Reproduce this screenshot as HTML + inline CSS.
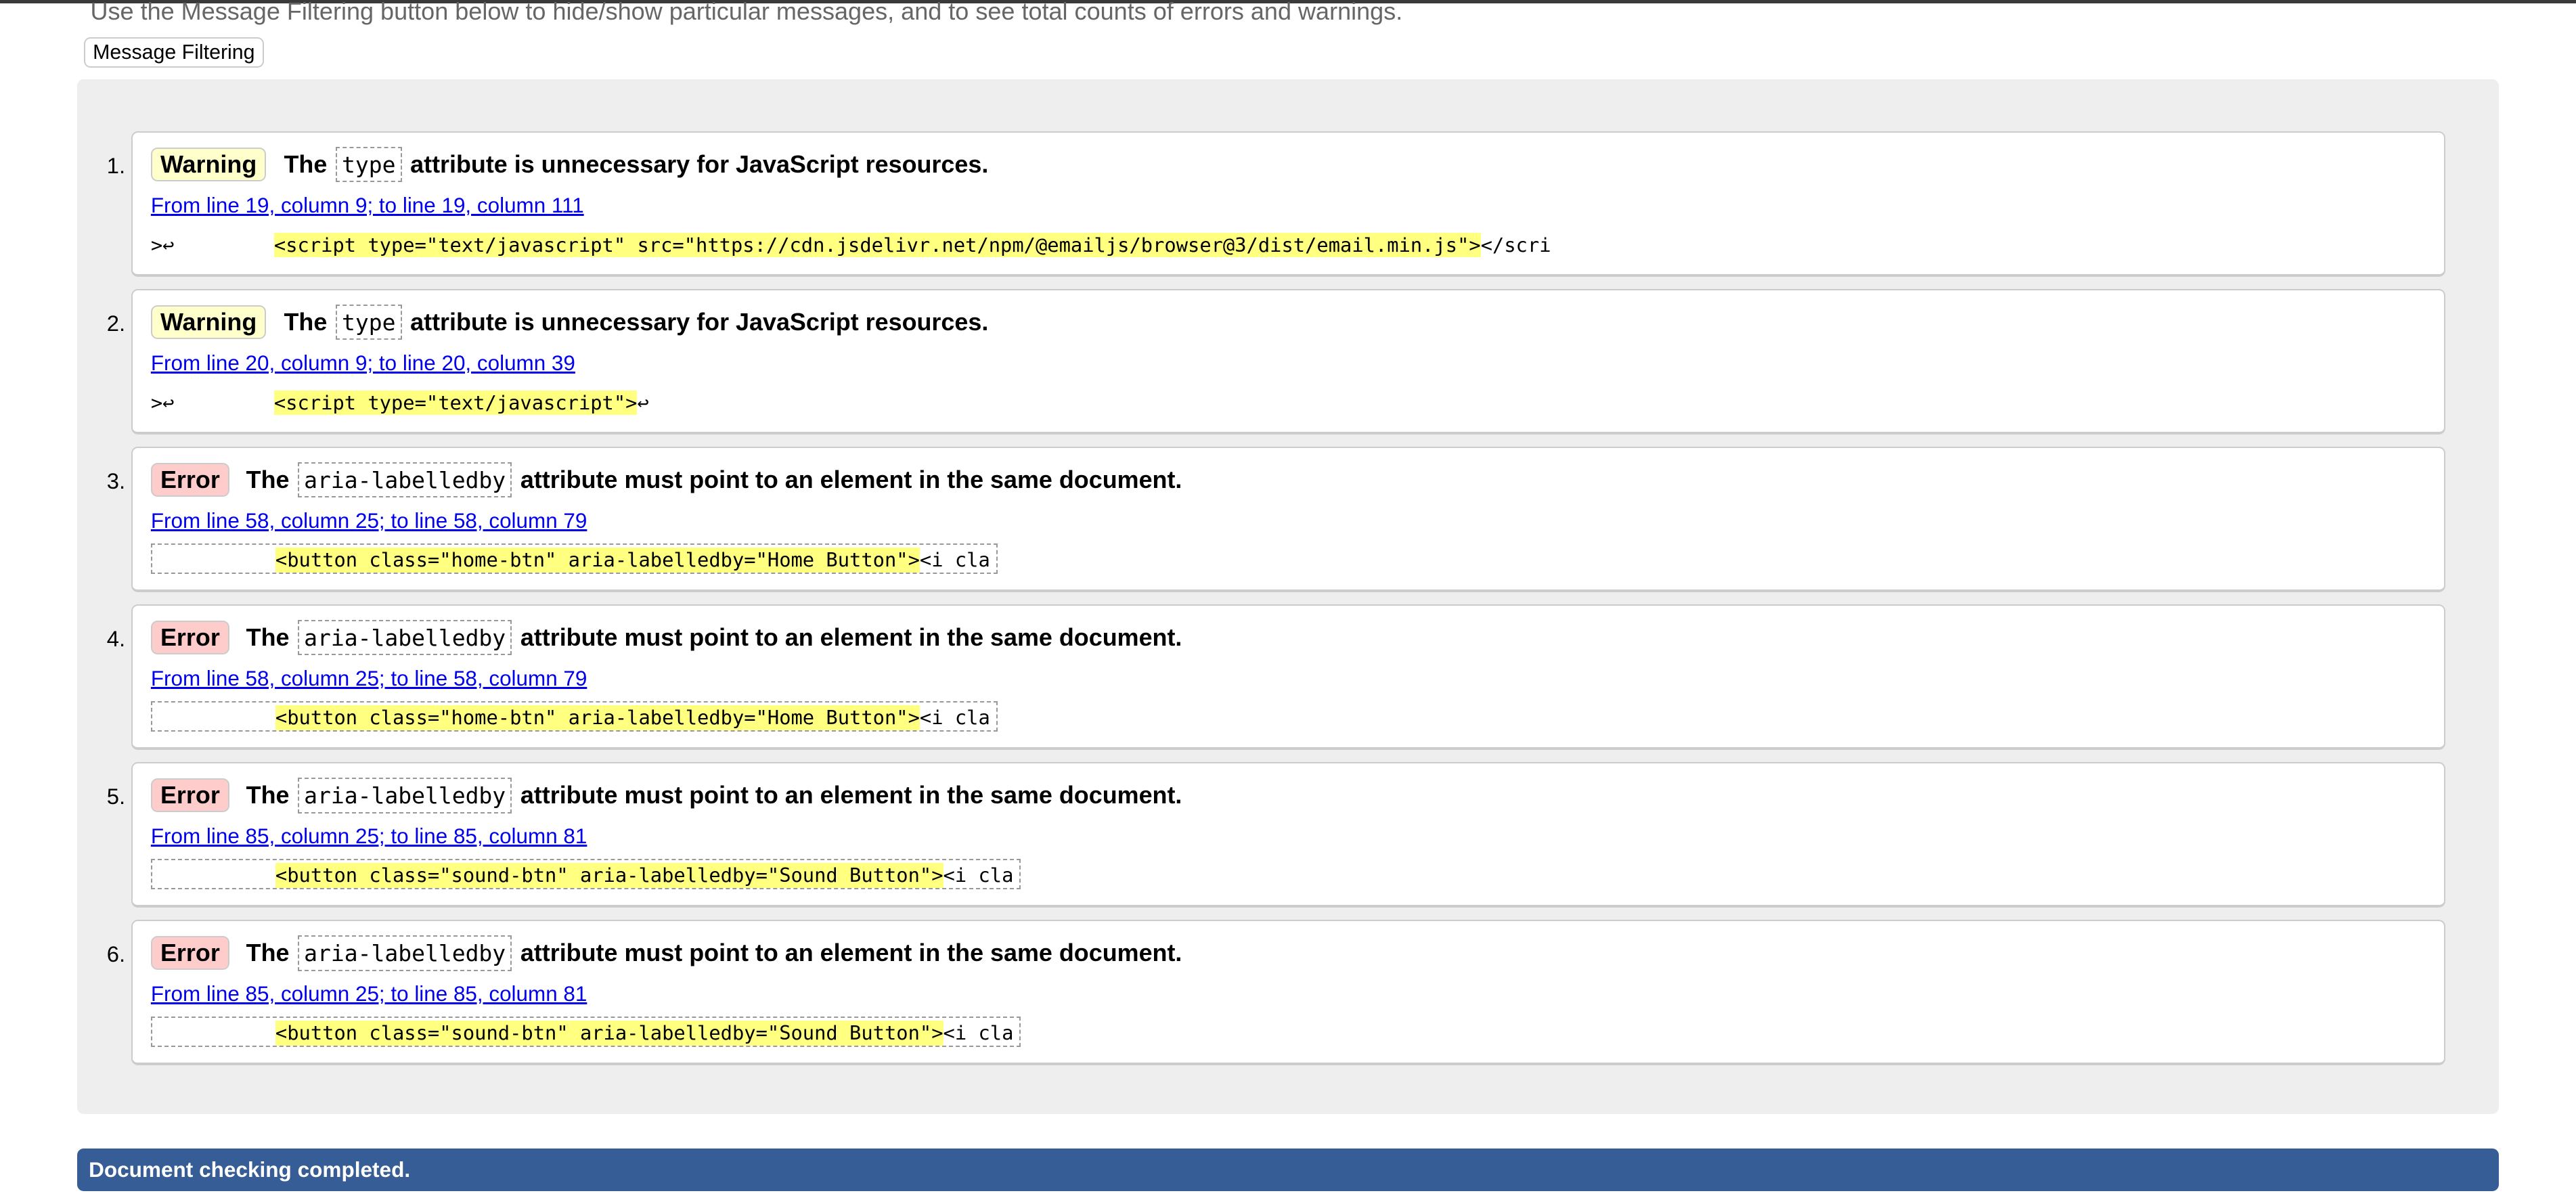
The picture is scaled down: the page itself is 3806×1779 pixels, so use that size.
<!DOCTYPE html>
<html><head><meta charset="utf-8"><style>
html{zoom:2.4273}
body{margin:0;width:1568px;height:733px;position:relative;overflow:hidden;background:#fff;font-family:"Liberation Sans",Arial,sans-serif;}
.topbar{position:absolute;left:0;top:0;width:1568px;height:2px;background:#3a3a3a}
.intro{position:absolute;left:55px;top:-3px;font-size:14.85px;color:#666;white-space:nowrap;line-height:20px}
.btn{position:absolute;left:51px;top:22.5px;width:108px;height:17px;border:1px solid #ccc;border-radius:4px;background:#fff;font-size:12.5px;line-height:17px;text-align:center;color:#000}
.panel{position:absolute;left:47px;top:48px;width:1474px;height:630px;background:#eee;border-radius:4px}
.num{position:absolute;left:65px;font-size:13.5px;color:#000}
.card{position:absolute;left:80px;width:1407px;height:86px;background:#fff;border:1px solid #ccc;border-bottom:2px solid #ccc;border-radius:4px}
.badge{position:absolute;left:11px;top:9px;height:19px;border:1px solid #ccc;border-radius:4px;font-weight:bold;font-size:14.8px;line-height:19px;padding:0 5px}
.w{background:#ffc}.e{background:#fcc}
.msg{position:absolute;top:8px;font-weight:bold;font-size:14.8px;line-height:22px;white-space:nowrap}
.msg code{font-family:"DejaVu Sans Mono","Liberation Mono",monospace;font-weight:normal;font-size:13.6px;border:1px dashed #999;padding:2px 3px;margin:0 1px}
.link{position:absolute;left:11px;top:37px;font-size:12.95px;color:#00e;text-decoration:underline;white-space:nowrap}
.src{position:absolute;left:11px;top:60px;height:17px;font-family:"DejaVu Sans Mono","Liberation Mono",monospace;font-size:11.85px;line-height:17px;white-space:nowrap}
.src .y{position:absolute;left:75px;top:0;white-space:pre}
.y b{font-weight:normal;background:#ffff80;display:inline-block;height:15px;line-height:15px}
.box{border:1px dashed #999;width:514px;height:17px;top:58px}
.box .y{left:75px;top:1px}
.box2{width:528px}
.mk{position:absolute;left:0;top:0}
.bar{position:absolute;left:47px;top:699px;width:1474px;height:26px;background:#365d95;border-radius:4px;color:#fff;font-weight:bold;font-size:13px;line-height:26px;padding-left:7px;box-sizing:border-box}
</style></head><body>
<div class="topbar"></div>
<div class="intro">Use the Message Filtering button below to hide/show particular messages, and to see total counts of errors and warnings.</div>
<div class="btn">Message Filtering</div>
<div class="panel"></div>

<div class="num" style="top:93px">1.</div>
<div class="card" style="top:80px">
<div class="badge w">Warning</div>
<div class="msg" style="left:92px">The <code>type</code> attribute is unnecessary for JavaScript resources.</div>
<div class="link">From line 19, column 9; to line 19, column 111</div>
<div class="src"><span class="mk">&gt;↩</span><span class="y"><b>&lt;script type="text/javascript" src="https://cdn.jsdelivr.net/npm/@emailjs/browser@3/dist/email.min.js"&gt;</b>&lt;/scri</span></div>
</div>

<div class="num" style="top:189px">2.</div>
<div class="card" style="top:176px">
<div class="badge w">Warning</div>
<div class="msg" style="left:92px">The <code>type</code> attribute is unnecessary for JavaScript resources.</div>
<div class="link">From line 20, column 9; to line 20, column 39</div>
<div class="src"><span class="mk">&gt;↩</span><span class="y"><b>&lt;script type="text/javascript"&gt;</b>↩</span></div>
</div>

<div class="num" style="top:285px">3.</div>
<div class="card" style="top:272px">
<div class="badge e">Error</div>
<div class="msg" style="left:69px">The <code>aria-labelledby</code> attribute must point to an element in the same document.</div>
<div class="link">From line 58, column 25; to line 58, column 79</div>
<div class="src box"><span class="y"><b>&lt;button class="home-btn" aria-labelledby="Home Button"&gt;</b>&lt;i cla</span></div>
</div>

<div class="num" style="top:381px">4.</div>
<div class="card" style="top:368px">
<div class="badge e">Error</div>
<div class="msg" style="left:69px">The <code>aria-labelledby</code> attribute must point to an element in the same document.</div>
<div class="link">From line 58, column 25; to line 58, column 79</div>
<div class="src box"><span class="y"><b>&lt;button class="home-btn" aria-labelledby="Home Button"&gt;</b>&lt;i cla</span></div>
</div>

<div class="num" style="top:477px">5.</div>
<div class="card" style="top:464px">
<div class="badge e">Error</div>
<div class="msg" style="left:69px">The <code>aria-labelledby</code> attribute must point to an element in the same document.</div>
<div class="link">From line 85, column 25; to line 85, column 81</div>
<div class="src box box2"><span class="y"><b>&lt;button class="sound-btn" aria-labelledby="Sound Button"&gt;</b>&lt;i cla</span></div>
</div>

<div class="num" style="top:573px">6.</div>
<div class="card" style="top:560px">
<div class="badge e">Error</div>
<div class="msg" style="left:69px">The <code>aria-labelledby</code> attribute must point to an element in the same document.</div>
<div class="link">From line 85, column 25; to line 85, column 81</div>
<div class="src box box2"><span class="y"><b>&lt;button class="sound-btn" aria-labelledby="Sound Button"&gt;</b>&lt;i cla</span></div>
</div>

<div class="bar">Document checking completed.</div>
</body></html>
